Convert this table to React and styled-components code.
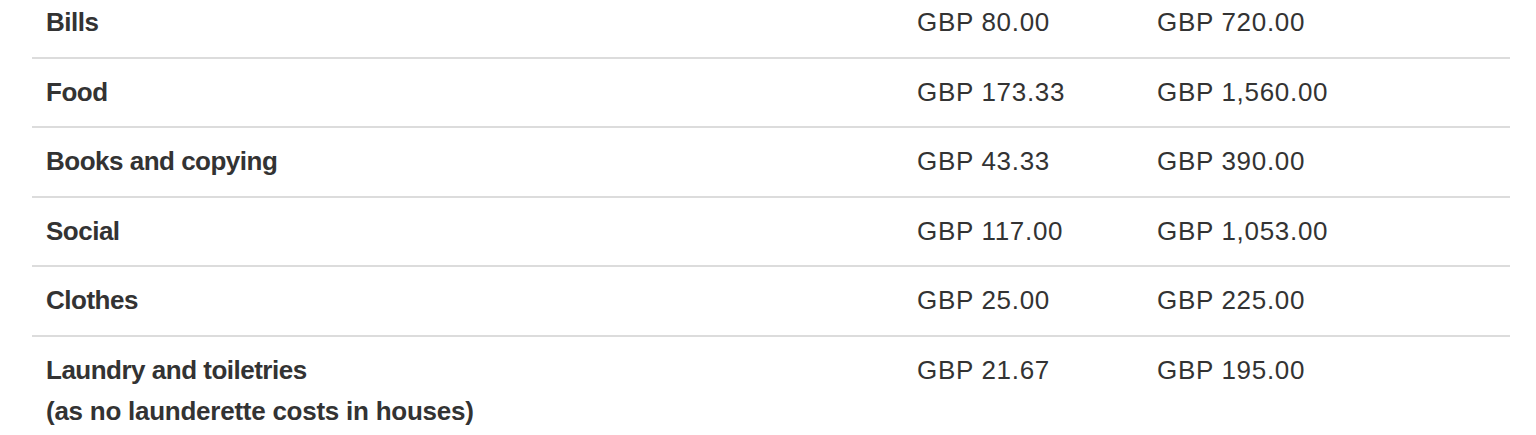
import React from 'react'
import styled, { createGlobalStyle } from 'styled-components'

const GlobalStyle = createGlobalStyle`
  body {
    margin: 0;
    background: #fff;
    font-family: "Liberation Sans", Arial, sans-serif;
    color: #333;
  }
`

const costs = [
  { label: 'Bills', month: 'GBP 80.00', year: 'GBP 720.00' },
  { label: 'Food', month: 'GBP 173.33', year: 'GBP 1,560.00' },
  { label: 'Books and copying', month: 'GBP 43.33', year: 'GBP 390.00' },
  { label: 'Social', month: 'GBP 117.00', year: 'GBP 1,053.00' },
  { label: 'Clothes', month: 'GBP 25.00', year: 'GBP 225.00' },
  {
    label: 'Laundry and toiletries',
    note: '(as no launderette costs in houses)',
    month: 'GBP 21.67',
    year: 'GBP 195.00',
  },
]

function App() {
  return (
    <>
      <GlobalStyle />
      <Wrap>
        <Table>
          <colgroup>
            <col style={{ width: 872 }} />
            <col style={{ width: 240 }} />
            <col />
          </colgroup>
          <tbody>
            {costs.map((row, i) => (
              <Row key={row.label} last={i === costs.length - 1}>
                <Label>
                  {row.label}
                  {row.note && (
                    <>
                      <br />
                      <Note>{row.note}</Note>
                    </>
                  )}
                </Label>
                <Amount>{row.month}</Amount>
                <Amount>{row.year}</Amount>
              </Row>
            ))}
          </tbody>
        </Table>
      </Wrap>
    </>
  )
}

export default App

const Wrap = styled.div`
  padding: 0 26px 0 32px;
  margin-top: -11px;
`

const Table = styled.table`
  width: 1478px;
  border-collapse: collapse;
  table-layout: fixed;
`

const Row = styled.tr`
  border-bottom: ${(p) => (p.last ? 'none' : '2px solid #dcdcdc')};
`

const Label = styled.td`
  padding: 13px 12px 13px 14px;
  font-size: 26px;
  line-height: 41px;
  font-weight: 700;
  letter-spacing: -0.5px;
  vertical-align: top;
  color: #333;
`

const Note = styled.span`
  letter-spacing: -0.25px;
`

const Amount = styled.td`
  padding: 13px 12px 13px 13px;
  font-size: 26px;
  line-height: 41.6px;
  letter-spacing: 0.7px;
  vertical-align: top;
  color: #333;
`
